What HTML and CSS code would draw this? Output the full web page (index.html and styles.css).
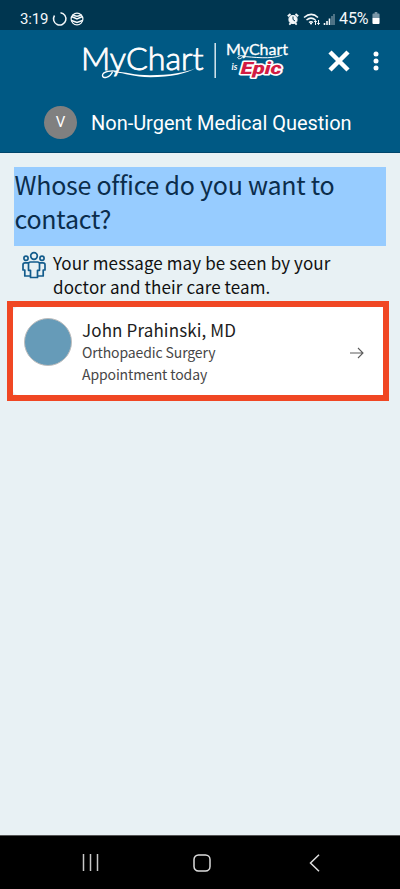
FILE: index.html
```html
<!DOCTYPE html>
<html lang="en">
<head>
<meta charset="utf-8">
<meta name="viewport" content="width=device-width">
<title>Non-Urgent Medical Question</title>
<link rel="stylesheet" href="styles.css">
</head>
<body>
<div class="status">
  <span class="time">3:19</span>
  <svg class="status-left" width="32" height="16" viewBox="0 0 32 16" fill="none" stroke="currentColor">
    <path d="M8.500 1.700A6.200 6.200 0 1 1 2.500 4.500" stroke-width="1.500"/>
    <path d="M19.500 5.500l5.500 2.500 5.500-2.500M19.500 9.500l5.500 2 5.500-2M20.500 3.700q4.500 3 9 0" stroke-width="1.500"/>
    <circle cx="25" cy="8" r="5.900" stroke-width="1.200"/>
  </svg>
  <svg class="status-right" width="50" height="16" viewBox="0 0 50 16" fill="none" stroke="currentColor">
    <circle cx="6" cy="8.500" r="4.100" fill="currentColor"/>
    <path d="M.8 5.300 3.500 3M11.200 5.300 8.500 3M2.300 13.700l1.500-1.500M9.700 13.700l-1.500-1.500" stroke-width="1.800"/>
    <path class="clock-hand" d="M6 5.500v3l2 1.500"/>
    <path d="M17 6.500q7.500-6.200 14 0M19.500 9q4.500-3.700 9 0M22 11.500q2-1.600 4 0" stroke-width="1.500"/>
    <circle cx="24" cy="12.500" r="1.100" fill="currentColor" stroke="none"/>
    <path d="M28.500 14V9.500m-1.300 1.500 1.300-1.500 1.300 1.500M31.500 9v4.500m-1.300-1.500 1.300 1.500 1.300-1.500"/>
    <path d="M37.500 14v-2M40 14v-4M42.500 14V7.500" stroke-width="1.600"/>
    <path d="M45 14V5M47 14V3" stroke-width="1.600" opacity=".4"/>
  </svg>
  <span class="percent">45%</span>
  <svg class="battery" width="8" height="13" viewBox="0 0 9 13" preserveAspectRatio="none"><path d="M3 0h3v1.500h1.500q1 0 1 1V6H.5V2.500q0-1 1-1H3z" fill="#7b98a8"/><path d="M.5 6h8v5q0 1-1 1h-6q-1 0-1-1z" fill="#fff"/></svg>
</div>
<header class="header">
  <div class="brand">
    <svg class="logos" width="212" height="50" viewBox="0 0 212 50" role="img" aria-label="MyChart">
      <text class="wordmark" x="-1" y="34" textLength="122.500" lengthAdjust="spacingAndGlyphs">MyChart</text>
      <path d="M35 35.500C30 34 20.500 35.500 20.500 39.500c0 3.300 7 3 10-3.700" fill="none" stroke="#fff" stroke-width="1.400"/>
      <path d="M32 35.200c12 .8 20 4 36 4 19 0 37-2.500 45.500-7.200-8 5.500-25 9.200-45 9.200-17 0-25-4.300-36.500-5z" fill="#fff"/>
      <path d="M133.200 7v35" stroke="#d9e8ef" stroke-width="1.500"/>
      <text class="small-wordmark" x="144" y="19" textLength="62" lengthAdjust="spacingAndGlyphs">MyChart</text>
      <path d="M162 20c-6-1.500-8 3-4.500 2.700 2 0 2.500-1 3-2.200 11 .3 28 3.500 40-1.500" fill="none" stroke="#fff" stroke-width="1"/>
      <text class="is" x="149.500" y="33.500">is</text>
      <text class="epic" transform="translate(158.500 38) skewX(-3)" textLength="41" lengthAdjust="spacingAndGlyphs">Epic</text>
    </svg>
    <svg class="close" width="24" height="24" viewBox="0 0 24 24"><path d="m3 3 18 18M21 3 3 21" stroke="#fff" stroke-width="4.500"/></svg>
    <svg class="more" width="6" height="20" viewBox="0 0 6 20" fill="#fff"><circle cx="3" cy="3" r="2.500"/><circle cx="3" cy="10" r="2.500"/><circle cx="3" cy="17" r="2.500"/></svg>
  </div>
  <div class="title-row"><span class="initial">V</span><span class="title">Non-Urgent Medical Question</span></div>
</header>
<main class="content">
  <h1 class="question">Whose office do you want to<br>contact?</h1>
  <div class="notice">
    <svg width="24" height="28" viewBox="0 0 24 28" fill="none" stroke="#135c8c" stroke-width="1.700" stroke-linejoin="round">
      <circle cx="12" cy="5" r="3.300"/><circle cx="4" cy="7.300" r="2.100"/><circle cx="20" cy="7.300" r="2.100"/>
      <path d="M8.500 11h7q2 0 2 2v6.300h-2v7.200h-7v-7.200h-2V13q0-2 2-2zM6.500 11.800H3q-2 0-2 2V19h1.800v6h5.500M17.500 11.800H21q2 0 2 2V19h-1.800v6h-5.500"/>
    </svg>
    <p class="notice-text">Your message may be seen by your<br>doctor and their care team.</p>
  </div>
  <div class="provider">
    <div class="card">
      <span class="avatar"></span>
      <div class="details"><div class="name">John Prahinski, MD</div><div class="meta">Orthopaedic Surgery</div><div class="meta">Appointment today</div></div>
      <svg class="arrow" width="14" height="12" viewBox="0 0 14 12" fill="none" stroke="#5c5c5c" stroke-width="1.100"><path d="M0 6h13M8 1l5 5-5 5"/></svg>
    </div>
  </div>
</main>
<nav class="navigation">
  <svg width="18" height="18" viewBox="0 0 18 18" stroke="#c8c8c8" stroke-width="1.500"><path d="M1.500 0v17M8.500 0v17M15.500 0v17"/></svg>
  <svg width="18" height="18" viewBox="0 0 18 18" fill="none" stroke="#ddd" stroke-width="1.500"><rect x="1" y="1" width="16" height="16" rx="4.500"/></svg>
  <svg width="11" height="18" viewBox="0 0 11 18" fill="none" stroke="#ddd" stroke-width="1.500"><path d="m10 .7-8.500 8.300 8.500 8.300"/></svg>
</nav>
</body>
</html>
```
FILE: styles.css
```css
* { box-sizing: border-box; }
body { margin: 0; width: 400px; height: 889px; display: flex; flex-direction: column; overflow: hidden; background: #e8f1f5; font-family: "Noto Sans CJK SC", "Noto Sans", sans-serif; }
svg { display: block; flex: none; }
.status { height: 30px; flex: none; display: flex; align-items: center; padding: 7px 19px 0 20px; background: #003650; color: #f4f8fa; font: 15px/18px Roboto, sans-serif; }
.time { width: 32px; flex: none; letter-spacing: -.2px; }
.status-right { margin-left: 203px; }
.percent { margin-left: 2px; width: 33px; flex: none; font-size: 16px; letter-spacing: -.1px; white-space: nowrap; }
.clock-hand { stroke: #003650; }
.header { height: 123px; flex: none; background: #005984; border-bottom: 1px solid #00466b; }
.brand { height: 62px; display: flex; align-items: center; padding: 0 20px 0 82px; }
.logos { overflow: visible; }
.wordmark { font: 300 30.5px Lato, sans-serif; fill: #fff; stroke: #fff; stroke-width: .8px; }
.small-wordmark { font: 16px Lato, sans-serif; fill: #fff; stroke: #fff; stroke-width: .3px; }
.is { font: italic bold 9px Lato, sans-serif; fill: #fff; }
.epic { font: italic 900 17px Roboto, sans-serif; fill: #d21c43; stroke: #fff; stroke-width: 3px; paint-order: stroke; stroke-linejoin: round; }
.close { margin-left: 33px; }
.more { margin-left: 22px; }
.title-row { display: flex; align-items: center; height: 61px; padding-left: 44px; color: #fff; font-family: Roboto, sans-serif; }
.initial { width: 33px; height: 33px; border-radius: 50%; background: #808080; font-size: 15px; line-height: 33px; text-align: center; }
.title { margin-left: 14px; font-size: 20px; line-height: 24px; letter-spacing: -.02px; white-space: nowrap; }
.content { flex: 1; padding-top: 14px; background: #e8f1f4; }
.question { margin: 0 14px; padding-left: .5px; height: 79px; width: 372px; background: #97ccff; color: #0b2d4c; font-size: 25px; font-weight: 400; line-height: 34px; letter-spacing: -.25px; font-variant-ligatures: common-ligatures; white-space: nowrap; }
.notice { display: flex; height: 55px; padding: 5px 0 0 22px; }
.notice-text { margin: 0 0 0 7px; font-size: 17px; line-height: 24px; letter-spacing: .1px; color: #111; white-space: nowrap; }
.provider { margin-left: 7px; width: 382px; height: 100px; border: 6px solid #f04723; background: #e8f1f4; }
.card { height: 100%; display: flex; align-items: center; background: #fff; border-radius: 5px 0 0 5px; padding: 0 19px 0 11px; }
.avatar { width: 48px; height: 48px; border: 1px solid #bdbdbd; border-radius: 50%; background: #669bb8; margin-bottom: 18px; }
.details { width: 268px; margin-left: 10px; color: #474747; white-space: nowrap; }
.name { color: #202020; font-size: 17px; line-height: 25px; letter-spacing: .13px; }
.meta { font-size: 14px; line-height: 21.5px; letter-spacing: -.12px; }
.arrow { margin-top: 4px; }
.navigation { height: 54px; flex: none; display: flex; align-items: center; justify-content: space-between; padding: 0 80px 0 82px; background: #000; border-top: 1px solid #555; }
.navigation svg:nth-child(2) { margin-right: 5px; }
```
